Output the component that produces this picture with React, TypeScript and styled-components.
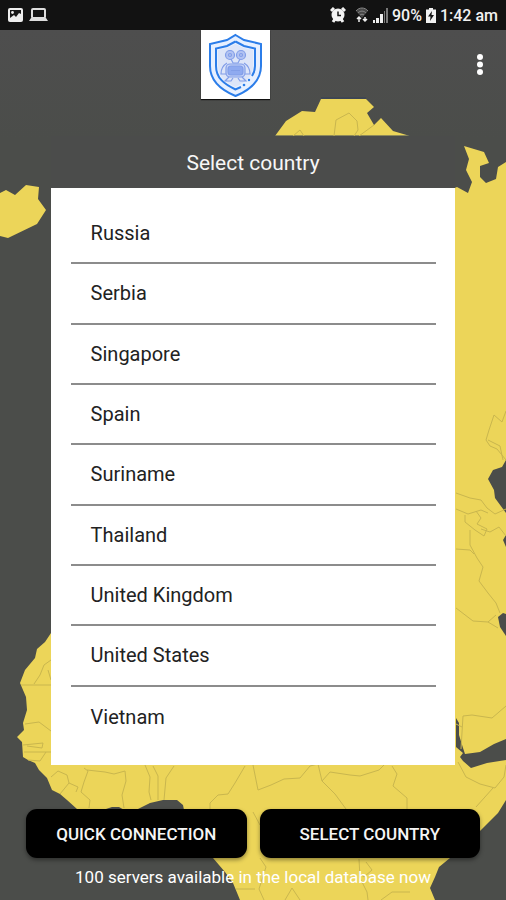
import React from "react";
import styled, { createGlobalStyle } from "styled-components";

const GlobalStyle = createGlobalStyle`
  *, *::before, *::after { box-sizing: border-box; }
  body { margin: 0; background: #4b4d4a; font-family: Roboto, "Liberation Sans", sans-serif; }
  button { font: inherit; border: 0; cursor: pointer; }
`;

const Page = styled.div`
  position: relative;
  isolation: isolate;
  display: flex;
  flex-direction: column;
  min-height: 100vh;
  overflow: hidden;
  background: linear-gradient(#4e4e4e 30px, #4b4d4a 140px);
`;

const MapLayer = styled.svg`
  position: absolute;
  inset: 0;
  z-index: -1;
  width: 100%;
  height: 100%;
`;

const StatusBar = styled.header`
  display: flex;
  align-items: center;
  justify-content: space-between;
  height: 30px;
  padding: 0 8px 0 7px;
  background: #121212;
  color: #f2f2f2;
  font-size: 16px;
  font-weight: 500;
`;

const StatusGroup = styled.div<{ $gap: number }>`
  display: flex;
  align-items: center;
  gap: ${(p) => p.$gap}px;
`;

const Toolbar = styled.div`
  display: grid;
  grid-template-columns: 1fr 69px 1fr;
  align-items: center;
  height: 69px;
  padding-right: 36px;
`;

const LogoTile = styled.div`
  grid-column: 2;
  height: 69px;
  background: #fff;
  box-shadow: 0 1px 1px #111;
`;

const MenuButton = styled.button`
  justify-self: end;
  display: grid;
  place-items: center;
  width: 28px;
  height: 40px;
  margin-right: -24px;
  padding: 0;
  background: none;
`;

const Dialog = styled.section`
  width: 80%;
  margin: 37px auto 0;
`;

const DialogTitle = styled.h1`
  display: flex;
  align-items: center;
  justify-content: center;
  height: 52px;
  margin: 0;
  padding-top: 2px;
  background: #4b4c4b;
  color: #f7f7f7;
  font-size: 21px;
  font-weight: 400;
`;

const CountryList = styled.ul`
  display: grid;
  grid-auto-rows: 1fr;
  min-height: 577px;
  margin: 0;
  padding: 16px 19px 18px 20px;
  background: #fff;
  list-style: none;
`;

const CountryItem = styled.li`
  display: flex;
  &:not(:last-child) { border-bottom: 2px solid #8c8c8c; }
`;

const CountryButton = styled.button`
  flex: 1;
  padding: 0 20px;
  background: none;
  color: #222;
  font-size: 20px;
  text-align: left;
`;

const Actions = styled.div`
  display: grid;
  grid-template-columns: 1fr 1fr;
  gap: 13px;
  margin-top: 44px;
  padding: 0 26px;
`;

const ActionButton = styled.button`
  height: 49px;
  border-radius: 11px;
  background: #000;
  box-shadow: 0 2px 4px rgba(0, 0, 0, 0.4);
  color: #f5f5f5;
  font-size: 17px;
  font-weight: 500;
  white-space: nowrap;
`;

const ServerNote = styled.p`
  margin: 8px 0 0;
  color: #fff;
  font-size: 17px;
  line-height: 22px;
  text-align: center;
`;

const countries = [
  "Russia",
  "Serbia",
  "Singapore",
  "Spain",
  "Suriname",
  "Thailand",
  "United Kingdom",
  "United States",
  "Vietnam",
];

const WorldMap = () => (
  <MapLayer viewBox="0 0 506 900" preserveAspectRatio="xMidYMin slice" aria-hidden="true">
    <g fill="#ecd559">
      <path d="M275 136 286 121 302 111 315 112 321 99H366L374 107 367 113 374 125 381 118 393 131 410 136Z" />
      <path d="M0 193 6 190 15 195 26 185 39 187 38 199 46 210 37 224 8 238 0 236Z" />
      <path d="M464 146 484 152 489 163 480 166V177L486 183 496 179 498 167 506 162V800L498 813 481 830 450 858 439 867 435 877 430 888 435 900H240L233 883 225 872 213 858 200 840 184 820V810L183 805 177 800H163L150 803 138 809 126 811 119 807H112L103 810 90 816 77 809 67 800 60 794 52 790 47 778 39 770 35 763 28 760 23 757 22 742 17 737 24 730 23 723 27 710 26 697 20 683 25 670 35 658 37 649 45 642 51 633 60 620 450 600V190L457 187 468 193 472 182 466 170 469 159Z" />
    </g>
    <path d="M321 98H366M275 136H410" stroke="#33405a" strokeWidth="1" />
    <g fill="#4b4d4a">
      <path d="M506 460 502 467 493 470 488 479 494 490 495 498 506 513Z" />
      <path d="M506 535 503 540 506 547Z" />
      <path d="M498 617 503 613 506 614V636L500 627Z" />
      <path d="M456 718 459 723 459 735 463 748 465 754 480 752 494 744 506 739V760L487 763 471 768 463 761 460 757 463 753 456 747Z" />
    </g>
    <g fill="none" stroke="#c9b64e" strokeWidth="1">
      <path d="M334 136 336 120 349 113 357 121 358 130 354 136M293 136 300 130 304 136M359 136 374 125" />
      <path d="M506 411 502 422 494 415 489 430 486 440 490 446 497 449 506 460M488 440 500 446 503 460" />
      <path d="M456 493 470 498 481 500 487 508 495 514 506 509M456 509 468 514 481 510 488 513M465 515V522L475 530 484 536 487 529 477 524 481 518 476 511M470 530V545L477 558 483 567 479 581 488 593 496 603 500 613M456 549 470 550 474 554M456 608 473 621 488 622 496 615M488 622 498 628M481 529 490 532 499 527 506 536" />
      <path d="M461 749 463 716 472 715 492 718 506 706M456 724 462 727" />
      <path d="M21 685H51M34 684 40 675 44 665 51 660M48 670 51 680M25 724 39 722 51 731M23 745 43 743 42 748 27 746M24 752H52M28 760 40 761 46 752M51 777 58 771 67 775 69 783 60 794M69 783 78 787 76 792M84 768 88 771 84 782 81 792 90 800 89 808M87 770 105 772 114 774 125 771 126 781 122 795 124 808M145 765 150 777 149 792 151 800M153 766 158 776V800M174 766 166 778 164 800M245 766 235 783 228 794 218 795 210 803V812M253 765 258 790 271 785 284 779 300 778 310 766 318 764 322 781 335 794 346 809M322 781 330 772 350 775 360 776 379 770 384 765M392 766 397 774 393 786 407 798 407 809M458 762 466 777 480 784 495 788 504 777 506 765M493 788 476 807M253 812 260 825H275M236 889H255" />
      <path d="M260 858 266 867 259 889 264 900M359 859 360 878 367 892 368 900M366 862 372 870 364 877 359 873M285 900 292 888 300 900M381 900 392 892 410 892" />
    </g>
  </MapLayer>
);

const ShieldLogo = () => (
  <svg width="69" height="69" viewBox="0 0 69 69" fill="none" role="img" aria-label="VPN shield">
    <path d="M34.500 5 43 10 60 14V36C60 51 49 60 34.500 66 20 60 9 51 9 36V14L26 10Z" fill="#e7f0ff" stroke="#2b7de9" strokeWidth="2" />
    <path d="M34.500 11.500 43 16 54 18.500V36C54 40 53 43 51 46M40 57 34.500 59.500C23 54 15 48 15 36V18.500L26 16 34.500 11.500" stroke="#2b7de9" strokeWidth="2" />
    <path d="M34.500 14 43 18 52 20V36C52 46 45 52 34.500 57 24 52 17 46 17 36V20L26 18Z" fill="#dde5f8" />
    <g stroke="#829ee8" strokeWidth="1.200">
      <circle cx="29" cy="25" r="4.500" fill="#b2c3f2" />
      <circle cx="40" cy="25" r="4.500" fill="#b2c3f2" />
      <circle cx="29" cy="25" r="1.500" />
      <circle cx="40" cy="25" r="1.500" />
      <path d="M30 29 32 33H37L39 29M26 33C21 36 20 41 20 44H25M43 33C48 36 49 41 49 44H44" />
      <rect x="25" y="34" width="19" height="13" rx="4" fill="#c6d4f8" />
      <rect x="27" y="36" width="15" height="9" rx="3" fill="#8faaf0" />
      <path d="M28 47 24 51H30L32 48M41 47 45 51H39L37 48M30 40.500H39" />
    </g>
    <circle cx="43" cy="55" r="1.300" fill="#2b7de9" />
    <circle cx="48" cy="50" r="1.200" fill="#2b7de9" />
  </svg>
);

const PictureIcon = () => (
  <svg width="17" height="16" viewBox="0 0 17 16" aria-hidden="true">
    <rect x="1" y="1" width="15" height="14" rx="2" fill="#eee" />
    <path d="M3 3H14V7L12 6 9 10 7 8 3 11Z" fill="#171717" />
    <circle cx="5.500" cy="5.500" r="1.400" fill="#eee" />
  </svg>
);

const LaptopIcon = () => (
  <svg width="19" height="16" viewBox="0 0 19 16" fill="none" aria-hidden="true">
    <rect x="3" y="2" width="13" height="9" rx="1" stroke="#ddd" strokeWidth="2" />
    <path d="M0 14H19L17 11H2Z" fill="#ddd" />
  </svg>
);

const AlarmIcon = () => (
  <svg width="16" height="16" viewBox="0 0 16 16" fill="none" aria-hidden="true">
    <path d="M1 4 4 1M12 1 15 4M3 15 5 12M13 15 11 12" stroke="#f2f2f2" strokeWidth="3" />
    <circle cx="8" cy="8" r="6.500" fill="#f2f2f2" />
    <path d="M8 4.500V8.500H11" stroke="#151515" strokeWidth="1.500" />
  </svg>
);

const WifiIcon = () => (
  <svg width="14" height="16" viewBox="0 0 14 16" fill="none" aria-hidden="true">
    <path d="M1 4C4 0 10 0 13 4L7 11Z" fill="#484848" />
    <path d="M1 4C4 0 10 0 13 4M3 6C5 3.500 9 3.500 11 6M5 8C6 7 8 7 9 8" stroke="#858585" />
    <path d="M4 15V10M2 12 4 10 6 12M10 10V14M8 12 10 14 12 12" stroke="#eee" strokeWidth="1.500" />
  </svg>
);

const SignalIcon = () => (
  <svg width="15" height="15" viewBox="0 0 15 15" aria-hidden="true">
    <path d="M0 12H2V15H0ZM3 10H6V15H3ZM7 6H10V15H7Z" fill="#eee" />
    <path d="M11 3H12V15H11ZM13 0H15V15H13Z" fill="#777" />
  </svg>
);

const BatteryIcon = () => (
  <svg width="10" height="15" viewBox="0 0 10 15" aria-hidden="true">
    <path d="M3 0H7V1.500H10V15H0V1.500H3Z" fill="#f2f2f2" />
    <path d="M6 3 2 8.500H4.500L4 13 8 7H5.500Z" fill="#151515" />
  </svg>
);

export default function App() {
  return (
    <>
      <GlobalStyle />
      <Page>
        <WorldMap />
        <StatusBar>
          <StatusGroup $gap={5}>
            <PictureIcon />
            <LaptopIcon />
          </StatusGroup>
          <StatusGroup $gap={4}>
            <StatusGroup $gap={9}>
              <AlarmIcon />
              <WifiIcon />
            </StatusGroup>
            <SignalIcon />
            <span>90%</span>
            <BatteryIcon />
            <span>1:42 am</span>
          </StatusGroup>
        </StatusBar>
        <Toolbar>
          <LogoTile>
            <ShieldLogo />
          </LogoTile>
          <MenuButton type="button" aria-label="More options">
            <svg width="6" height="22" viewBox="0 0 6 22" fill="#fff" aria-hidden="true">
              <circle cx="3" cy="3" r="3" />
              <circle cx="3" cy="10.500" r="3" />
              <circle cx="3" cy="18" r="3" />
            </svg>
          </MenuButton>
        </Toolbar>
        <Dialog aria-labelledby="country-title">
          <DialogTitle id="country-title">Select country</DialogTitle>
          <CountryList>
            {countries.map((name) => (
              <CountryItem key={name}>
                <CountryButton type="button">{name}</CountryButton>
              </CountryItem>
            ))}
          </CountryList>
        </Dialog>
        <Actions>
          <ActionButton type="button">QUICK CONNECTION</ActionButton>
          <ActionButton type="button">SELECT COUNTRY</ActionButton>
        </Actions>
        <ServerNote>100 servers available in the local database now</ServerNote>
      </Page>
    </>
  );
}
